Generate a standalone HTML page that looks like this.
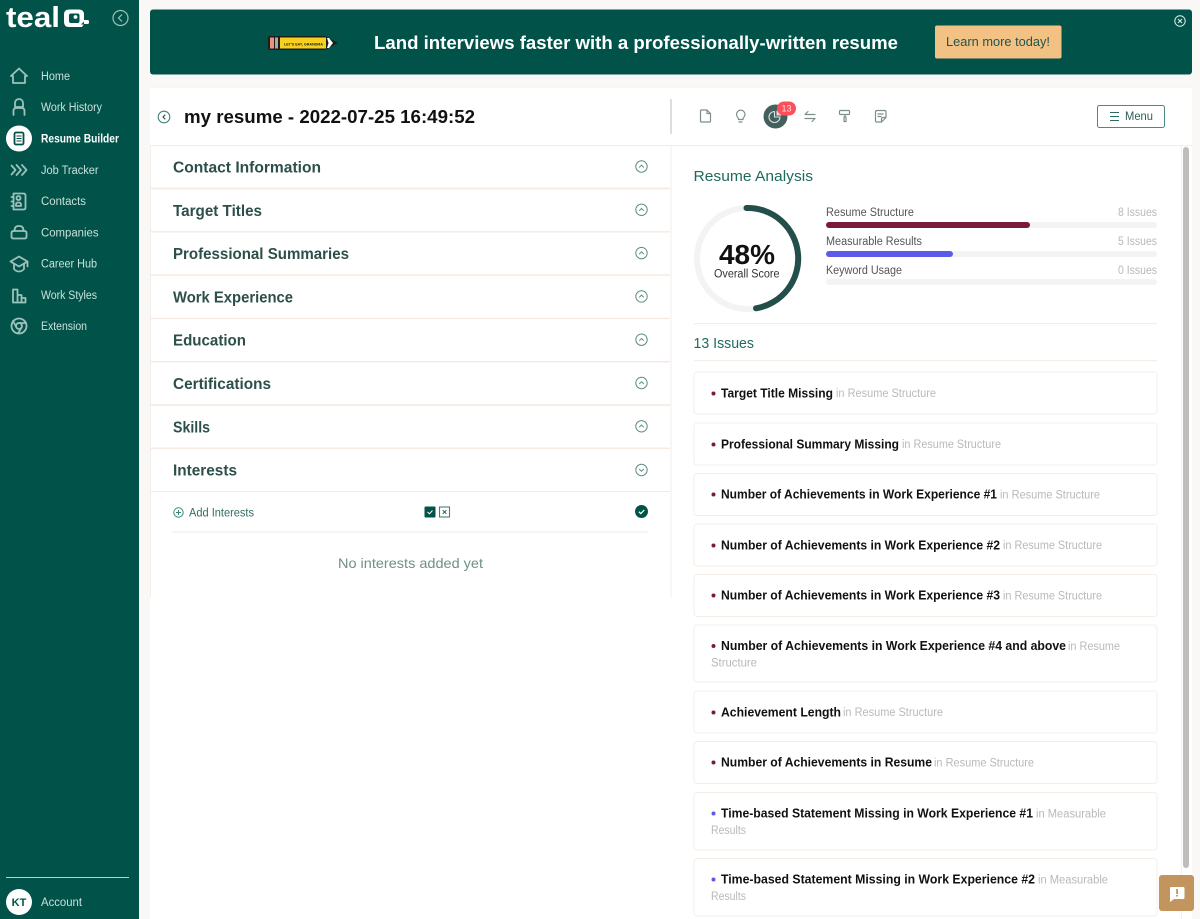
<!DOCTYPE html>
<html><head><meta charset="utf-8"><title>Resume Analysis</title>
<style>
html,body{margin:0;padding:0;width:1200px;height:919px;overflow:hidden;background:#faf8f6}
svg{display:block;font-family:"Liberation Sans",sans-serif}
.n{font-size:11.5px;fill:#c9e0da}
.h{font-size:15.5px;font-weight:700;fill:#2d4f4a}
.t{font-size:12.5px;font-weight:700;fill:#111}
.g{font-size:11.5px;fill:#b9b9b9}
.l{font-size:11.5px;fill:#555}
.ic{fill:none;stroke:#9cc2ba;stroke-width:1.8;stroke-linecap:round;stroke-linejoin:round}
.tb{fill:none;stroke:#7d8f8b;stroke-width:1.2;stroke-linecap:round;stroke-linejoin:round}
.card{fill:#fff;stroke:#f5eee8;stroke-width:1}
.sep{stroke:#f5e9e1;stroke-width:1.4}
</style></head><body>
<svg width="1200" height="919" viewBox="0 0 1200 919" xmlns="http://www.w3.org/2000/svg">
<defs>
<g id="up"><circle r="5.7" fill="none" stroke="#5d8d85" stroke-width="1"/><path d="M-2.3 1L0-1.3 2.3 1" fill="none" stroke="#5d8d85" stroke-width="1"/></g>
<g id="down"><circle r="5.7" fill="none" stroke="#5d8d85" stroke-width="1"/><path d="M-2.3-1L0 1.3 2.3-1" fill="none" stroke="#5d8d85" stroke-width="1"/></g>
</defs>
<rect width="1200" height="919" fill="#faf8f6"/>

<!-- sidebar -->
<rect width="139" height="919" fill="#01534a"/>
<text x="6" y="27" font-size="29" font-weight="700" fill="#fff" textLength="54" lengthAdjust="spacingAndGlyphs">teal</text>
<path d="M69 9.500h10q5 0 5 5v5.500h3.500q1.500 0 1.500 1.500v1q0 1.500-1.500 1.500h-3.500l-2 3h-13q-5 0-5-5v-7.500q0-5 5-5z" fill="#fff"/>
<rect x="69" y="13.500" width="10.500" height="9.500" rx="2" fill="#01534a"/>
<circle cx="75.500" cy="17" r="1.900" fill="#fff"/>
<path d="M81 24.500l3-3v3z" fill="#01534a"/>
<circle cx="120.500" cy="18" r="7.500" fill="none" stroke="#9cc2ba" stroke-width="1.200"/>
<path d="M122 14.500L118.500 18 122 21.500" fill="none" stroke="#9cc2ba" stroke-width="1.200"/>

<path class="ic" d="M11 76L19 68.500 27 76H25V83H13V76Z"/>
<path class="ic" d="M15 107V103a4 4 0 0 1 8 0V107ZM13.500 115V111q0-3 3-3h5q3 0 3 3v4"/>
<circle cx="19" cy="138.500" r="13" fill="#fff"/>
<rect x="14.500" y="132.500" width="9" height="12" rx="1.500" fill="none" stroke="#01534a" stroke-width="1.800"/>
<path d="M16.500 136h5M16.500 138.500h5M16.500 141h5" stroke="#01534a" stroke-width="1"/>
<path class="ic" d="M11.500 165.500L15.500 170 11.500 174.500M16.500 165L21 170 16.500 175M22 165L26.500 170 22 175"/>
<path class="ic" d="M13.500 193.500h10q2 0 2 2v12q0 2-2 2h-10zM11.500 197h2M11.500 201.500h2M11.500 206h2M16 206v-1.500q0-2 2.500-2t2.500 2v1.500zM16.500 198a2 2 0 0 1 4 0q0 2-2 2t-2-2z"/>
<path class="ic" d="M11.500 233q0-2 2-2h11q2 0 2 2v3.500q0 2-2 2h-11q-2 0-2-2zM14.500 231q0-5 4-5h1q4 0 4 5"/>
<path class="ic" d="M10.500 261.500L19 256.500 27.500 261.500 19 266.500ZM14 264v5q2 2.500 5 2.500t5-2.500v-5M27.500 261.500v5"/>
<path class="ic" d="M13 289.500h4.500v13H13zM17.500 295h4v7.500h-4zM21.500 298h4v4.500h-4z"/>
<circle class="ic" cx="19" cy="326" r="7.500"/><circle class="ic" cx="19" cy="326" r="3"/>
<path class="ic" d="M19 323h7M16.500 327.500L13 321M21.500 327.500L18 333.500"/>

<text class="n" x="41" y="80" textLength="29" lengthAdjust="spacingAndGlyphs">Home</text>
<text class="n" x="41" y="111" textLength="61" lengthAdjust="spacingAndGlyphs">Work History</text>
<text class="n" x="41" y="142.500" textLength="78" lengthAdjust="spacingAndGlyphs" font-weight="700" style="fill:#fff">Resume Builder</text>
<text class="n" x="41" y="174" textLength="57.500" lengthAdjust="spacingAndGlyphs">Job Tracker</text>
<text class="n" x="41" y="205" textLength="45" lengthAdjust="spacingAndGlyphs">Contacts</text>
<text class="n" x="41" y="236.500" textLength="57.500" lengthAdjust="spacingAndGlyphs">Companies</text>
<text class="n" x="41" y="267.500" textLength="56" lengthAdjust="spacingAndGlyphs">Career Hub</text>
<text class="n" x="41" y="299" textLength="56" lengthAdjust="spacingAndGlyphs">Work Styles</text>
<text class="n" x="41" y="330" textLength="46" lengthAdjust="spacingAndGlyphs">Extension</text>

<rect x="6" y="877" width="123" height="1" fill="#b9d4ce"/>
<circle cx="19" cy="902" r="13" fill="#fff"/>
<text x="19" y="906" font-size="11" font-weight="700" fill="#01534a" text-anchor="middle">KT</text>
<text class="n" x="41" y="906" textLength="41" lengthAdjust="spacingAndGlyphs">Account</text>

<!-- banner -->
<rect x="150" y="9.500" width="1042" height="65" rx="3" fill="#01534a"/>
<path d="M270 36h55l13 7-13 7h-55q-2 0-2-2v-10q0-2 2-2z" fill="#1d1d1d"/>
<rect x="270" y="37.500" width="4" height="11" fill="#e8957a"/>
<rect x="275" y="37.500" width="3" height="11" fill="#aaa"/>
<rect x="280" y="37.500" width="46" height="11" fill="#f6d21f"/>
<path d="M327 38h2l4 5-4 5h-2l1.500-5z" fill="#fff"/>
<text x="284" y="45.500" font-size="3.200" font-weight="700" fill="#222" textLength="39" lengthAdjust="spacingAndGlyphs">LET'S EAT, GRANDMA</text>
<text x="374" y="49" font-size="18" font-weight="700" fill="#fff" textLength="524" lengthAdjust="spacingAndGlyphs">Land interviews faster with a professionally-written resume</text>
<rect x="935" y="25.500" width="126.500" height="33" rx="2" fill="#f2c285"/>
<text x="946" y="46" font-size="12.500" fill="#23544c" textLength="104" lengthAdjust="spacingAndGlyphs">Learn more today!</text>
<circle cx="1180" cy="21" r="5.200" fill="none" stroke="#e2efec" stroke-width="1"/>
<path d="M1178 19l4 4M1182 19l-4 4" stroke="#e2efec" stroke-width="1"/>

<!-- main panel -->
<rect x="150" y="87" width="1042" height="832" fill="#fff"/>
<rect x="150" y="86.500" width="1042" height="1" fill="#f5efea"/>
<rect x="150" y="145" width="1042" height="1.200" fill="#f5ede7"/>
<rect x="670.500" y="99" width="1" height="35" fill="#b4bdba"/>
<circle cx="164" cy="117" r="5.800" fill="none" stroke="#3f857a" stroke-width="1.100"/>
<path d="M165.300 114.700L163 117l2.300 2.300" fill="none" stroke="#23544c" stroke-width="1.100"/>
<text x="184" y="123" font-size="18.500" font-weight="700" fill="#111" textLength="291" lengthAdjust="spacingAndGlyphs">my resume - 2022-07-25 16:49:52</text>

<!-- toolbar -->
<path class="tb" d="M701.500 110h5.500l3.500 3.500v7.500q0 1-1 1h-8q-1 0-1-1v-10q0-1 1-1zM707 110v3.500h3.500"/>
<path class="tb" d="M738.500 119.500q0-1.500-1-2.500a4.200 4.200 0 1 1 6.500 0q-1 1-1 2.500zM739 122h3"/>
<circle cx="775.500" cy="116.500" r="12" fill="#43605c"/>
<path d="M780 117a5.500 5.500 0 1 1-5.500-5.500V117Z" fill="none" stroke="#d9e3e1" stroke-width="1.100" stroke-linejoin="round"/>
<path d="M776.500 110.500a5 5 0 0 1 5 5h-5z" fill="#d9e3e1"/>
<rect x="777" y="101.500" width="19" height="14" rx="7" fill="#ff4d5a"/>
<text x="786.500" y="111.500" font-size="9" fill="#ffe3e3" text-anchor="middle">13</text>
<path class="tb" d="M815 114.500H805l3-3M805 118.500h10l-3 3"/>
<path class="tb" d="M840.500 110.500h8q1 0 1 1v2q0 1-1 1h-8q-1 0-1-1v-2q0-1 1-1zM845 114.500v2.500M844 117h2v4.500h-2z"/>
<path class="tb" d="M877 110.500h7.500q1.500 0 1.500 1.500v5.500l-4.500 4.500H877q-1.500 0-1.500-1.500V112q0-1.500 1.500-1.500zM878 114h5M878 116.500h3M881.500 122v-3q0-1.500 1.500-1.500h3"/>
<rect x="1097.500" y="105.500" width="67" height="22" rx="2" fill="#fff" stroke="#4a8a80" stroke-width="1"/>
<path d="M1110 112.500h9M1110 116.500h9M1110 120.500h9" stroke="#2d6a60" stroke-width="1.100"/>
<text x="1125" y="120" font-size="11.500" fill="#2d5f57" textLength="28" lengthAdjust="spacingAndGlyphs">Menu</text>

<!-- accordions -->
<rect x="150" y="146" width="1" height="451" fill="#f5ede7"/>
<rect x="670.500" y="146" width="1" height="451" fill="#f5ede7"/>
<line class="sep" x1="151" x2="670" y1="188.500" y2="188.500"/>
<line class="sep" x1="151" x2="670" y1="231.800" y2="231.800"/>
<line class="sep" x1="151" x2="670" y1="275.100" y2="275.100"/>
<line class="sep" x1="151" x2="670" y1="318.400" y2="318.400"/>
<line class="sep" x1="151" x2="670" y1="361.700" y2="361.700"/>
<line class="sep" x1="151" x2="670" y1="405" y2="405"/>
<line class="sep" x1="151" x2="670" y1="448.300" y2="448.300"/>
<rect x="151" y="491" width="519" height="1" fill="#f1ece8"/>
<text class="h" x="173" y="172.500" textLength="148" lengthAdjust="spacingAndGlyphs">Contact Information</text>
<text class="h" x="173" y="215.800" textLength="89" lengthAdjust="spacingAndGlyphs">Target Titles</text>
<text class="h" x="173" y="259.100" textLength="176" lengthAdjust="spacingAndGlyphs">Professional Summaries</text>
<text class="h" x="173" y="302.400" textLength="120" lengthAdjust="spacingAndGlyphs">Work Experience</text>
<text class="h" x="173" y="345.700" textLength="73" lengthAdjust="spacingAndGlyphs">Education</text>
<text class="h" x="173" y="389" textLength="98" lengthAdjust="spacingAndGlyphs">Certifications</text>
<text class="h" x="173" y="432.300" textLength="37" lengthAdjust="spacingAndGlyphs">Skills</text>
<text class="h" x="173" y="475.600" textLength="64" lengthAdjust="spacingAndGlyphs">Interests</text>
<use href="#up" x="641.500" y="166.500"/>
<use href="#up" x="641.500" y="209.800"/>
<use href="#up" x="641.500" y="253.100"/>
<use href="#up" x="641.500" y="296.400"/>
<use href="#up" x="641.500" y="339.700"/>
<use href="#up" x="641.500" y="383"/>
<use href="#up" x="641.500" y="426.300"/>
<use href="#down" x="641.500" y="470"/>

<circle cx="178.500" cy="512.500" r="4.700" fill="none" stroke="#3f857a" stroke-width="1"/>
<path d="M176 512.500h5M178.500 510v5" stroke="#3f857a" stroke-width="1"/>
<text x="189" y="516.500" font-size="11.500" fill="#2f6d63" textLength="65" lengthAdjust="spacingAndGlyphs">Add Interests</text>
<rect x="424.500" y="506.500" width="11" height="11" rx="1" fill="#01534a"/>
<path d="M427.500 512l2 1.800 3-3.300" fill="none" stroke="#fff" stroke-width="1"/>
<rect x="439.500" y="507" width="10" height="10" fill="#fff" stroke="#3f857a" stroke-width="1.100"/>
<path d="M442.700 510.200l3.600 3.600M446.300 510.200l-3.600 3.600" stroke="#23544c" stroke-width="1"/>
<circle cx="641.500" cy="511.500" r="6.500" fill="#01534a"/>
<path d="M638.800 511.700l2 1.900 3.500-3.600" fill="none" stroke="#fff" stroke-width="1.200"/>
<rect x="172.500" y="531.500" width="475" height="1.200" fill="#f5ede7"/>
<text x="338" y="568" font-size="14" fill="#6f8f89" textLength="145" lengthAdjust="spacingAndGlyphs">No interests added yet</text>

<!-- analysis -->
<text x="693.500" y="181" font-size="15" fill="#1f6a5e" textLength="119.500" lengthAdjust="spacingAndGlyphs">Resume Analysis</text>
<circle cx="747.500" cy="258.500" r="50.500" fill="none" stroke="#f3f3f3" stroke-width="6"/>
<path d="M746.500 208A50.500 50.500 0 0 1 756 308.300" fill="none" stroke="#234f4a" stroke-width="6" stroke-linecap="round"/>
<text x="719" y="264" font-size="28" font-weight="700" fill="#111" textLength="56" lengthAdjust="spacingAndGlyphs">48%</text>
<text x="714" y="277.500" font-size="11.500" fill="#333" textLength="65.500" lengthAdjust="spacingAndGlyphs">Overall Score</text>

<text class="l" x="826" y="216" textLength="88" lengthAdjust="spacingAndGlyphs">Resume Structure</text>
<text class="g" x="1118" y="216" textLength="39" lengthAdjust="spacingAndGlyphs">8 Issues</text>
<rect x="826" y="222" width="331" height="6" rx="3" fill="#f3f3f3"/>
<rect x="826" y="222" width="204" height="6" rx="3" fill="#7a1b3c"/>
<text class="l" x="826" y="245" textLength="96" lengthAdjust="spacingAndGlyphs">Measurable Results</text>
<text class="g" x="1118" y="245" textLength="39" lengthAdjust="spacingAndGlyphs">5 Issues</text>
<rect x="826" y="251" width="331" height="6" rx="3" fill="#f3f3f3"/>
<rect x="826" y="251" width="127" height="6" rx="3" fill="#5b5be8"/>
<text class="l" x="826" y="274" textLength="76" lengthAdjust="spacingAndGlyphs">Keyword Usage</text>
<text class="g" x="1118" y="274" textLength="39" lengthAdjust="spacingAndGlyphs">0 Issues</text>
<rect x="826" y="279" width="331" height="6" rx="3" fill="#f3f3f3"/>

<rect x="694" y="323" width="463" height="1.200" fill="#f5ede7"/>
<text x="693.500" y="348" font-size="15" fill="#1f6a5e" textLength="60.500" lengthAdjust="spacingAndGlyphs">13 Issues</text>
<rect x="694" y="360" width="463" height="1.200" fill="#f5ede7"/>

<!-- cards -->
<rect class="card" x="694" y="372" width="463" height="42" rx="3"/>
<rect class="card" x="694" y="423" width="463" height="42" rx="3"/>
<rect class="card" x="694" y="473.500" width="463" height="42" rx="3"/>
<rect class="card" x="694" y="524" width="463" height="42" rx="3"/>
<rect class="card" x="694" y="574.500" width="463" height="42" rx="3"/>
<rect class="card" x="694" y="625" width="463" height="57" rx="3"/>
<rect class="card" x="694" y="691" width="463" height="42" rx="3"/>
<rect class="card" x="694" y="741.500" width="463" height="42" rx="3"/>
<rect class="card" x="694" y="792.500" width="463" height="57.500" rx="3"/>
<rect class="card" x="694" y="858.500" width="463" height="57.500" rx="3"/>

<g fill="#7a1b3c">
<circle cx="713.500" cy="393.500" r="2"/><circle cx="713.500" cy="444.500" r="2"/><circle cx="713.500" cy="494.500" r="2"/><circle cx="713.500" cy="545.500" r="2"/><circle cx="713.500" cy="595.500" r="2"/><circle cx="713.500" cy="646" r="2"/><circle cx="713.500" cy="712.500" r="2"/><circle cx="713.500" cy="762.500" r="2"/>
</g>
<g fill="#5b5be8"><circle cx="713.500" cy="813.500" r="2"/><circle cx="713.500" cy="879.500" r="2"/></g>

<text class="t" x="721" y="397.500" textLength="112" lengthAdjust="spacingAndGlyphs">Target Title Missing</text>
<text class="g" x="836" y="397" textLength="100" lengthAdjust="spacingAndGlyphs">in Resume Structure</text>
<text class="t" x="721" y="448.500" textLength="178" lengthAdjust="spacingAndGlyphs">Professional Summary Missing</text>
<text class="g" x="902" y="448" textLength="99" lengthAdjust="spacingAndGlyphs">in Resume Structure</text>
<text class="t" x="721" y="498.500" textLength="276" lengthAdjust="spacingAndGlyphs">Number of Achievements in Work Experience #1</text>
<text class="g" x="1000" y="498.500" textLength="100" lengthAdjust="spacingAndGlyphs">in Resume Structure</text>
<text class="t" x="721" y="549.500" textLength="279" lengthAdjust="spacingAndGlyphs">Number of Achievements in Work Experience #2</text>
<text class="g" x="1003" y="549" textLength="99" lengthAdjust="spacingAndGlyphs">in Resume Structure</text>
<text class="t" x="721" y="599.500" textLength="279" lengthAdjust="spacingAndGlyphs">Number of Achievements in Work Experience #3</text>
<text class="g" x="1003" y="599.500" textLength="99" lengthAdjust="spacingAndGlyphs">in Resume Structure</text>
<text class="t" x="721" y="650" textLength="345" lengthAdjust="spacingAndGlyphs">Number of Achievements in Work Experience #4 and above</text>
<text class="g" x="1068" y="650" textLength="52" lengthAdjust="spacingAndGlyphs">in Resume</text>
<text class="g" x="711" y="666.500" textLength="46" lengthAdjust="spacingAndGlyphs">Structure</text>
<text class="t" x="721" y="716.500" textLength="120" lengthAdjust="spacingAndGlyphs">Achievement Length</text>
<text class="g" x="843" y="716" textLength="100" lengthAdjust="spacingAndGlyphs">in Resume Structure</text>
<text class="t" x="721" y="766.500" textLength="211" lengthAdjust="spacingAndGlyphs">Number of Achievements in Resume</text>
<text class="g" x="934" y="766.500" textLength="100" lengthAdjust="spacingAndGlyphs">in Resume Structure</text>
<text class="t" x="721" y="817.500" textLength="312" lengthAdjust="spacingAndGlyphs">Time-based Statement Missing in Work Experience #1</text>
<text class="g" x="1036" y="817.500" textLength="70" lengthAdjust="spacingAndGlyphs">in Measurable</text>
<text class="g" x="711" y="834" textLength="35" lengthAdjust="spacingAndGlyphs">Results</text>
<text class="t" x="721" y="883.500" textLength="314" lengthAdjust="spacingAndGlyphs">Time-based Statement Missing in Work Experience #2</text>
<text class="g" x="1038" y="883.500" textLength="70" lengthAdjust="spacingAndGlyphs">in Measurable</text>
<text class="g" x="711" y="900" textLength="35" lengthAdjust="spacingAndGlyphs">Results</text>

<!-- scrollbar -->
<rect x="1181" y="146" width="1" height="773" fill="#f1f1f1"/>
<rect x="1183" y="147" width="6" height="721" rx="3" fill="#bdbdbd"/>
<rect x="1192" y="87" width="8" height="832" fill="#faf8f6"/>

<!-- feedback -->
<rect x="1159" y="875" width="35" height="36" rx="3" fill="#c2955f"/>
<path d="M1171 887h12q1.500 0 1.500 1.500v9q0 1.500-1.500 1.500h-9l-4 3v-13.500q0-1.500 1-1.500z" fill="#fff"/>
<rect x="1176.300" y="889" width="1.500" height="5" fill="#c2773f"/>
<rect x="1176.300" y="895" width="1.500" height="1.500" fill="#c2773f"/>
</svg>
</body></html>
